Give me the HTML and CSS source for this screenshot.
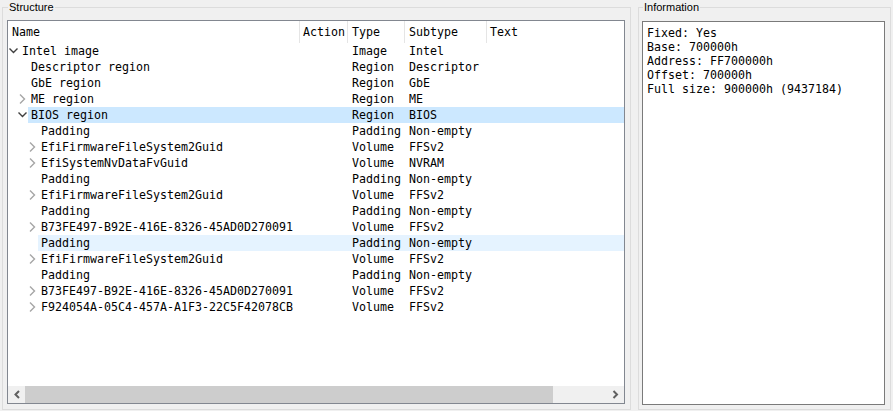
FILE: index.html
```html
<!DOCTYPE html>
<html>
<head>
<meta charset="utf-8">
<link rel="stylesheet" href="styles.css">
</head>
<body>
<div class="app">
  <fieldset class="group group-structure">
    <legend class="group-label">Structure</legend>
    <div class="tree">
      <div class="tree-header">
        <div class="hcell c-name">Name</div>
        <div class="hcell c-action">Action</div>
        <div class="hcell c-type">Type</div>
        <div class="hcell c-sub">Subtype</div>
        <div class="hcell c-text last">Text</div>
      </div>
      <div class="tree-body">
        <div class="row l0"><div class="cell c-name"><span class="arrow"><svg viewBox="0 0 14 16" width="14" height="16"><polyline class="exp" points="2,6 5.5,9.5 9,6"/></svg></span><span class="label">Intel image</span></div><div class="cell c-action"></div><div class="cell c-type">Image</div><div class="cell c-sub">Intel</div><div class="cell c-text"></div></div>
        <div class="row l1"><div class="cell c-name"><span class="arrow"></span><span class="label">Descriptor region</span></div><div class="cell c-action"></div><div class="cell c-type">Region</div><div class="cell c-sub">Descriptor</div><div class="cell c-text"></div></div>
        <div class="row l1"><div class="cell c-name"><span class="arrow"></span><span class="label">GbE region</span></div><div class="cell c-action"></div><div class="cell c-type">Region</div><div class="cell c-sub">GbE</div><div class="cell c-text"></div></div>
        <div class="row l1"><div class="cell c-name"><span class="arrow"><svg viewBox="0 0 14 16" width="14" height="16"><polyline class="col" points="3.5,4 7.5,8 3.5,12"/></svg></span><span class="label">ME region</span></div><div class="cell c-action"></div><div class="cell c-type">Region</div><div class="cell c-sub">ME</div><div class="cell c-text"></div></div>
        <div class="row l1 selected"><div class="cell c-name"><span class="arrow"><svg viewBox="0 0 14 16" width="14" height="16"><polyline class="exp" points="2,6 5.5,9.5 9,6"/></svg></span><span class="label">BIOS region</span></div><div class="cell c-action"></div><div class="cell c-type">Region</div><div class="cell c-sub">BIOS</div><div class="cell c-text"></div></div>
        <div class="row l2"><div class="cell c-name"><span class="arrow"></span><span class="label">Padding</span></div><div class="cell c-action"></div><div class="cell c-type">Padding</div><div class="cell c-sub">Non-empty</div><div class="cell c-text"></div></div>
        <div class="row l2"><div class="cell c-name"><span class="arrow"><svg viewBox="0 0 14 16" width="14" height="16"><polyline class="col" points="3.5,4 7.5,8 3.5,12"/></svg></span><span class="label">EfiFirmwareFileSystem2Guid</span></div><div class="cell c-action"></div><div class="cell c-type">Volume</div><div class="cell c-sub">FFSv2</div><div class="cell c-text"></div></div>
        <div class="row l2"><div class="cell c-name"><span class="arrow"><svg viewBox="0 0 14 16" width="14" height="16"><polyline class="col" points="3.5,4 7.5,8 3.5,12"/></svg></span><span class="label">EfiSystemNvDataFvGuid</span></div><div class="cell c-action"></div><div class="cell c-type">Volume</div><div class="cell c-sub">NVRAM</div><div class="cell c-text"></div></div>
        <div class="row l2"><div class="cell c-name"><span class="arrow"></span><span class="label">Padding</span></div><div class="cell c-action"></div><div class="cell c-type">Padding</div><div class="cell c-sub">Non-empty</div><div class="cell c-text"></div></div>
        <div class="row l2"><div class="cell c-name"><span class="arrow"><svg viewBox="0 0 14 16" width="14" height="16"><polyline class="col" points="3.5,4 7.5,8 3.5,12"/></svg></span><span class="label">EfiFirmwareFileSystem2Guid</span></div><div class="cell c-action"></div><div class="cell c-type">Volume</div><div class="cell c-sub">FFSv2</div><div class="cell c-text"></div></div>
        <div class="row l2"><div class="cell c-name"><span class="arrow"></span><span class="label">Padding</span></div><div class="cell c-action"></div><div class="cell c-type">Padding</div><div class="cell c-sub">Non-empty</div><div class="cell c-text"></div></div>
        <div class="row l2"><div class="cell c-name"><span class="arrow"><svg viewBox="0 0 14 16" width="14" height="16"><polyline class="col" points="3.5,4 7.5,8 3.5,12"/></svg></span><span class="label">B73FE497-B92E-416E-8326-45AD0D270091</span></div><div class="cell c-action"></div><div class="cell c-type">Volume</div><div class="cell c-sub">FFSv2</div><div class="cell c-text"></div></div>
        <div class="row l2 hover"><div class="cell c-name"><span class="arrow"></span><span class="label">Padding</span></div><div class="cell c-action"></div><div class="cell c-type">Padding</div><div class="cell c-sub">Non-empty</div><div class="cell c-text"></div></div>
        <div class="row l2"><div class="cell c-name"><span class="arrow"><svg viewBox="0 0 14 16" width="14" height="16"><polyline class="col" points="3.5,4 7.5,8 3.5,12"/></svg></span><span class="label">EfiFirmwareFileSystem2Guid</span></div><div class="cell c-action"></div><div class="cell c-type">Volume</div><div class="cell c-sub">FFSv2</div><div class="cell c-text"></div></div>
        <div class="row l2"><div class="cell c-name"><span class="arrow"></span><span class="label">Padding</span></div><div class="cell c-action"></div><div class="cell c-type">Padding</div><div class="cell c-sub">Non-empty</div><div class="cell c-text"></div></div>
        <div class="row l2"><div class="cell c-name"><span class="arrow"><svg viewBox="0 0 14 16" width="14" height="16"><polyline class="col" points="3.5,4 7.5,8 3.5,12"/></svg></span><span class="label">B73FE497-B92E-416E-8326-45AD0D270091</span></div><div class="cell c-action"></div><div class="cell c-type">Volume</div><div class="cell c-sub">FFSv2</div><div class="cell c-text"></div></div>
        <div class="row l2"><div class="cell c-name"><span class="arrow"><svg viewBox="0 0 14 16" width="14" height="16"><polyline class="col" points="3.5,4 7.5,8 3.5,12"/></svg></span><span class="label">F924054A-05C4-457A-A1F3-22C5F42078CB</span></div><div class="cell c-action"></div><div class="cell c-type">Volume</div><div class="cell c-sub">FFSv2</div><div class="cell c-text"></div></div>
      </div>
      <div class="hscroll">
        <div class="sbtn"><svg viewBox="0 0 17 17" width="17" height="17"><polyline points="11,5 7.5,8.5 11,12"/></svg></div>
        <div class="thumb"></div>
        <div class="track"></div>
        <div class="sbtn"><svg viewBox="0 0 17 17" width="17" height="17"><polyline points="6.5,5 10,8.5 6.5,12"/></svg></div>
      </div>
    </div>
  </fieldset>
  <fieldset class="group group-info">
    <legend class="group-label">Information</legend>
    <div class="info">
      <div class="info-line">Fixed: Yes</div>
      <div class="info-line">Base: 700000h</div>
      <div class="info-line">Address: FF700000h</div>
      <div class="info-line">Offset: 700000h</div>
      <div class="info-line">Full size: 900000h (9437184)</div>
    </div>
  </fieldset>
</div>
</body>
</html>
```

FILE: styles.css
```css
html, body {
  margin: 0;
  padding: 0;
  background: #f0f0f0;
}
body {
  width: 893px;
  height: 411px;
  overflow: hidden;
  font-family: "DejaVu Sans Mono", "Liberation Mono", monospace;
  font-size: 11.63px;
  color: #000;
}
.app {
  display: flex;
  gap: 7px;
  padding-left: 2px;
  height: 410px;
}
.group {
  margin: 0;
  border: 1px solid #dcdcdc;
  min-width: 0;
  height: 410px;
  box-sizing: border-box;
  display: flex;
  flex-direction: column;
}
.group-label {
  font-family: "Liberation Sans", Arial, sans-serif;
  font-size: 11px;
  line-height: 13px;
  padding: 1px 1px 0;
  margin-left: 1px;
  color: #000;
}
.group-structure {
  width: 629px;
  padding: 6px 5px 5px 4px;
}
.group-info {
  width: 253px;
  padding: 7px 5px 4px 3px;
}
.tree {
  flex: 1;
  border: 1px solid #828790;
  background: #fff;
  display: flex;
  flex-direction: column;
  min-height: 0;
  overflow: hidden;
}
.tree-header, .row {
  display: grid;
  grid-template-columns: 292px 48px 57px 82px 1fr;
}
.tree-header {
  height: 22px;
}
.hcell {
  padding: 1px 0 0 4px;
  line-height: 21px;
  border-right: 1px solid #e5e5e5;
  white-space: nowrap;
  overflow: hidden;
}
.hcell.c-action { padding-left: 3px; }
.hcell.last { border-right: none; padding-left: 3px; }
.tree-body {
  flex: 1;
  min-height: 0;
}
.row {
  height: 16px;
  --hl: 0px;
}
.cell {
  white-space: nowrap;
  overflow: hidden;
  padding-top: 1px;
  line-height: 15px;
}
.cell.c-type, .cell.c-sub { padding-left: 4px; }
.c-name {
  display: flex;
  align-items: flex-start;
}
.c-name .label {
  line-height: 15px;
}
.row .cell.c-name { padding-top: 0; }
.c-name .label { padding-top: 1px; }
.row.l0 .c-name { padding-left: 0; }
.row.l1 .c-name { padding-left: 9px; }
.row.l2 .c-name { padding-left: 19px; }
.row.l1 { --hl: 20px; }
.row.l2 { --hl: 30px; }
.row.selected {
  background: linear-gradient(to right, transparent var(--hl), #cce8ff var(--hl));
}
.row.hover {
  background: linear-gradient(to right, transparent var(--hl), #e5f3ff var(--hl));
}
.arrow {
  width: 14px;
  height: 16px;
  flex: none;
  display: block;
}
.arrow svg { display: block; }
.arrow polyline {
  fill: none;
  stroke-width: 1.4;
  stroke-linecap: square;
}
.arrow .exp { stroke: #404040; }
.arrow .col { stroke: #a6a6a6; }
.hscroll {
  height: 17px;
  display: flex;
  background: #f0f0f0;
  flex: none;
}
.sbtn {
  width: 17px;
  height: 17px;
  flex: none;
}
.sbtn svg { display: block; }
.sbtn polyline {
  fill: none;
  stroke: #606060;
  stroke-width: 2;
}
.thumb {
  width: 528px;
  flex: none;
  background: #cdcdcd;
}
.track { flex: 1; }
.info {
  flex: 1;
  border: 1px solid #7a7a7a;
  background: #fff;
  padding: 4px 4px 3px;
  min-height: 0;
}
.info-line {
  line-height: 14px;
  white-space: nowrap;
}
```
